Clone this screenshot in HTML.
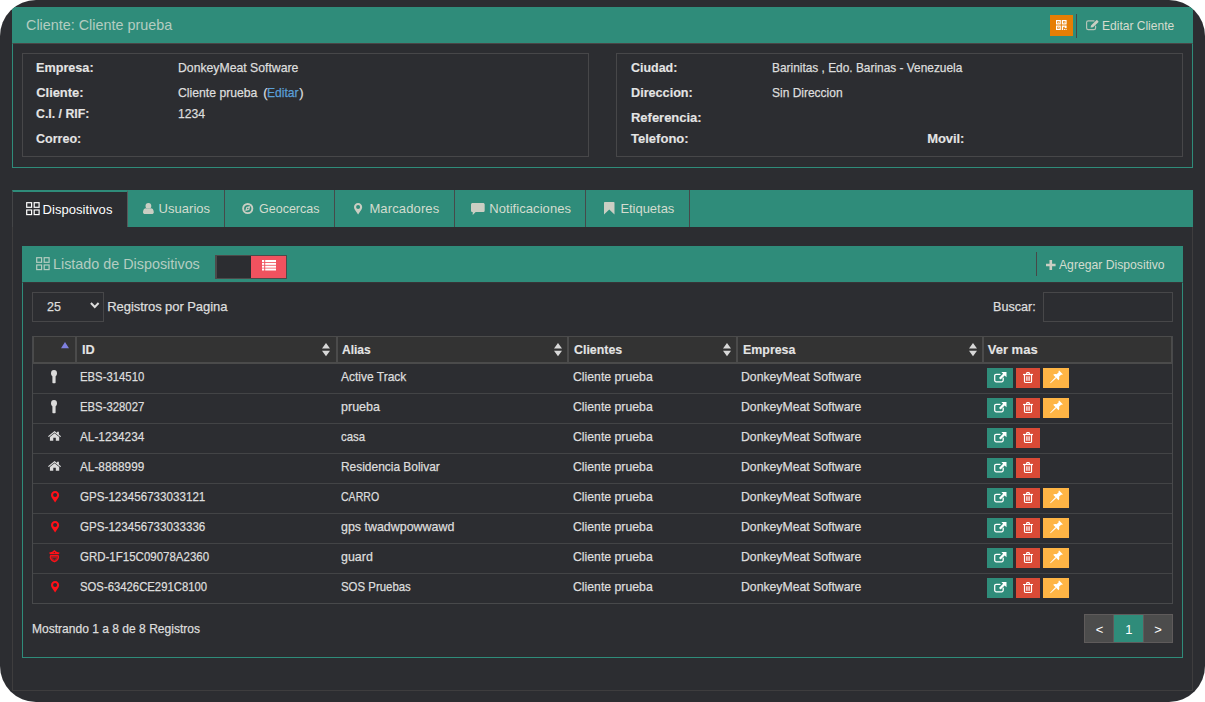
<!DOCTYPE html>
<html lang="es">
<head>
<meta charset="utf-8">
<title>Cliente: Cliente prueba</title>
<style>
html,body{margin:0;padding:0;background:#fff;}
body{width:1205px;height:702px;overflow:hidden;font-family:"Liberation Sans",sans-serif;font-size:13px;color:#ddd;}
#app{position:absolute;left:0;top:0;width:1205px;height:702px;background:#2c2d31;border-radius:36px;overflow:hidden;}
.a{position:absolute;}
.t{position:absolute;white-space:pre;line-height:16px;height:16px;transform-origin:0 0;-webkit-text-stroke:0.25px;}
.g{background:#2f8c7a;}
#p1h{left:12px;top:7px;width:1181px;height:36px;}
#p1b{left:12px;top:43px;width:1179px;height:123px;border:1px solid #2f8c7a;border-top:1px solid #4a4647;}
.box{position:absolute;border:1px solid #474749;top:53px;height:102px;}
#tabs{left:12px;top:190px;width:1181px;height:37px;}
#tabc{left:12px;top:227px;width:1179px;height:463px;border:1px solid #3e3d3e;border-top:none;}
#tab1{left:12px;top:190px;width:114px;height:35px;background:#2c2d31;border-top:2px solid #2f8c7a;border-left:1px solid #444547;border-right:1px solid #58595b;}
.sep{position:absolute;top:190px;width:1px;height:37px;background:#46494a;}
#p2h{left:22px;top:246px;width:1161px;height:36px;}
#p2b{left:22px;top:282px;width:1159px;height:374px;border:1px solid #2f8c7a;border-top:1px solid #373437;}
.inp{position:absolute;top:292px;height:28px;border:1px solid #474749;}
#tbl{left:32px;top:336px;width:1139px;height:266px;border:1px solid #48494b;}
.th{position:absolute;top:336px;height:25px;background:#333;border:1px solid #4b4b4b;}
.rl{position:absolute;left:33px;width:1139px;height:1px;background:#434446;}
.bt{position:absolute;height:20px;}
.bg{left:987px;width:26px;background:#2f8c7a;}
.br{left:1016px;width:24px;background:#d94a36;}
.by{left:1043px;width:26px;background:#ffb545;}
.pg{position:absolute;top:614px;height:27px;width:29px;border:1px solid #5f5b5b;background:#4c4c4c;}
svg{position:absolute;overflow:visible;}
</style>
</head>
<body>
<div id="app">
<!-- client panel -->
<div id="p1h" class="a g"></div>
<div id="p1b" class="a"></div>
<div class="box" style="left:22px;width:565px;"></div>
<div class="box" style="left:616px;width:565px;"></div>
<div class="a" style="left:1050px;top:15px;width:23px;height:21px;background:#e67e04;"></div>
<div class="a" style="left:1076px;top:14px;width:1px;height:24px;background:#474848;"></div>
<!-- tabs -->
<div id="tabs" class="a g"></div>
<div id="tabc" class="a"></div>
<div id="tab1" class="a"></div>
<div class="sep" style="left:224px"></div>
<div class="sep" style="left:334px"></div>
<div class="sep" style="left:454px"></div>
<div class="sep" style="left:585px"></div>
<div class="sep" style="left:689px"></div>
<!-- devices panel -->
<div id="p2h" class="a g"></div>
<div id="p2b" class="a"></div>
<div class="a" style="left:1036px;top:252px;width:1px;height:24px;background:#474848;"></div>
<div class="a" style="left:215px;top:255px;width:69px;height:22px;border:1px solid #4c4a4a;border-left-width:2px;background:#2c2d31;"></div>
<div class="a" style="left:251px;top:256px;width:35px;height:22px;background:#f0525f;"></div>
<div class="inp" style="left:32px;width:70px;"></div>
<div class="inp" style="left:1043px;width:128px;"></div>
<!-- table -->
<div id="tbl" class="a"></div>
<div class="th" style="left:33px;width:41px;"></div>
<div class="th" style="left:76px;width:259px;"></div>
<div class="th" style="left:337px;width:229px;"></div>
<div class="th" style="left:568px;width:167px;"></div>
<div class="th" style="left:737px;width:244px;"></div>
<div class="th" style="left:983px;width:187px;"></div>
<div class="rl" style="top:363px;background:#4b4b4b"></div>
<div class="rl" style="top:393px"></div>
<div class="bt bg" style="top:368px"></div><div class="bt br" style="top:368px"></div>
<div class="bt by" style="top:368px"></div>
<div class="rl" style="top:423px"></div>
<div class="bt bg" style="top:398px"></div><div class="bt br" style="top:398px"></div>
<div class="bt by" style="top:398px"></div>
<div class="rl" style="top:453px"></div>
<div class="bt bg" style="top:428px"></div><div class="bt br" style="top:428px"></div>
<div class="rl" style="top:483px"></div>
<div class="bt bg" style="top:458px"></div><div class="bt br" style="top:458px"></div>
<div class="rl" style="top:513px"></div>
<div class="bt bg" style="top:488px"></div><div class="bt br" style="top:488px"></div>
<div class="bt by" style="top:488px"></div>
<div class="rl" style="top:543px"></div>
<div class="bt bg" style="top:518px"></div><div class="bt br" style="top:518px"></div>
<div class="bt by" style="top:518px"></div>
<div class="rl" style="top:573px"></div>
<div class="bt bg" style="top:548px"></div><div class="bt br" style="top:548px"></div>
<div class="bt by" style="top:548px"></div>
<div class="bt bg" style="top:578px"></div><div class="bt br" style="top:578px"></div>
<div class="bt by" style="top:578px"></div>
<!-- pagination -->
<div class="pg" style="left:1084px;width:28px;"></div>
<div class="pg" style="left:1143px;width:28px;"></div>
<div class="pg" style="left:1113px;width:29px;background:#2f8c7a;"></div>
<svg style="left:1056px;top:20px" width="11" height="10" viewBox="0 0 11 10"><g fill="none" stroke="#fff" stroke-width="1.2"><rect x="0.6" y="0.6" width="3.6" height="3.3"/><rect x="6.4" y="0.6" width="3.6" height="3.3"/><rect x="0.6" y="6.1" width="3.6" height="3.3"/></g><g fill="#fff"><rect x="1.9" y="1.8" width="1" height="0.9"/><rect x="7.7" y="1.8" width="1" height="0.9"/><rect x="1.9" y="7.3" width="1" height="0.9"/><rect x="5.8" y="5.5" width="1.3" height="4.5"/><rect x="7.1" y="5.5" width="1.6" height="1.6"/><rect x="8.7" y="5.5" width="1.9" height="2.6"/><rect x="7.9" y="8.9" width="1" height="1.1"/><rect x="9.6" y="8.9" width="1" height="1.1"/></g></svg>
<svg style="left:1086px;top:20px" width="13" height="10" viewBox="0 0 13 10"><path d="M9.6 6.2 V7.9 a1.7 1.7 0 0 1 -1.7 1.7 H2.3 A1.7 1.7 0 0 1 0.6 7.9 V2.6 A1.7 1.7 0 0 1 2.3 0.9 H8" fill="none" stroke="#cbcec3" stroke-width="1.2" stroke-linecap="round" opacity="0.85"/><path d="M4.6 7.6 l0.4 -2.1 L10.3 0.2 a0.7 0.7 0 0 1 1 0 l1 1 a0.7 0.7 0 0 1 0 1 L7 7.3 z" fill="#cbcec3"/></svg>
<svg style="left:26px;top:201.5px" width="14" height="13.4" viewBox="0 0 14 13.4"><g fill="none" stroke="#fff" stroke-width="1.2"><rect x="0.7" y="0.7" width="4.9" height="4.6"/><rect x="8.2" y="0.7" width="4.9" height="4.6"/><rect x="0.7" y="8" width="4.9" height="4.6"/><rect x="8.2" y="8" width="4.9" height="4.6"/></g></svg>
<svg style="left:35.7px;top:257px" width="14" height="13.4" viewBox="0 0 14 13.4"><g fill="none" stroke="#b4cdc1" stroke-width="1.2"><rect x="0.7" y="0.7" width="4.9" height="4.6"/><rect x="8.2" y="0.7" width="4.9" height="4.6"/><rect x="0.7" y="8" width="4.9" height="4.6"/><rect x="8.2" y="8" width="4.9" height="4.6"/></g></svg>
<svg style="left:143.3px;top:202.7px" width="10.8" height="11.1" viewBox="0 0 10.8 11.1"><circle cx="5.4" cy="2.9" r="2.9" fill="#cbcec3"/><path d="M0 9.3 C0 6.8 1.2 5.2 3 5.2 c0.6 0.5 1.5 0.8 2.4 0.8 s1.8 -0.3 2.4 -0.8 c1.8 0 3 1.6 3 4.1 c0 1.1 -0.8 1.8 -1.9 1.8 H1.9 C0.8 11.1 0 10.4 0 9.3 z" fill="#cbcec3"/></svg>
<svg style="left:242.3px;top:202.7px" width="11.5" height="11.1" viewBox="0 0 11.5 11.1"><circle cx="5.75" cy="5.55" r="4.6" fill="none" stroke="#cbcec3" stroke-width="1.9"/><path d="M3.2 8.1 L4.3 4.1 L8.3 3 L7.2 7 z M5.75 4.8 a0.75 0.75 0 1 0 0 1.5 a0.75 0.75 0 0 0 0 -1.5 z" fill="#cbcec3" fill-rule="evenodd"/></svg>
<svg style="left:354px;top:203px" width="8.2" height="11.4" viewBox="0 0 8.2 11.4"><path d="M4.1 0 C1.8 0 0 1.8 0 4.1 c0 0.9 0.3 1.6 0.7 2.4 L4.1 11.4 l3.4 -4.9 c0.4 -0.8 0.7 -1.5 0.7 -2.4 C8.2 1.8 6.4 0 4.1 0 z m0 6.1 a2 2 0 1 1 0 -4 a2 2 0 0 1 0 4 z" fill="#cbcec3" fill-rule="evenodd"/></svg>
<svg style="left:470.5px;top:203px" width="13.7" height="12" viewBox="0 0 13.7 12"><path d="M0 1.6 C0 0.7 0.7 0 1.6 0 h10.5 c0.9 0 1.6 0.7 1.6 1.6 v5.8 c0 0.9 -0.7 1.6 -1.6 1.6 H4.7 L1.7 11.9 V9 H1.6 C0.7 9 0 8.3 0 7.4 z" fill="#cbcec3"/></svg>
<svg style="left:604.2px;top:202.4px" width="10.5" height="12.5" viewBox="0 0 10.5 12.5"><path d="M0.8 0 h8.9 a0.8 0.8 0 0 1 0.8 0.8 V12.5 L5.25 7.6 L0 12.5 V0.8 A0.8 0.8 0 0 1 0.8 0 z" fill="#cbcec3"/></svg>
<svg style="left:1046px;top:260px" width="9.6" height="10" viewBox="0 0 9.6 10"><path d="M3.5 0 h2.6 v3.7 h3.5 v2.6 H6.1 V10 H3.5 V6.3 H0 V3.7 h3.5 z" fill="#cbcec3"/></svg>
<svg style="left:261.6px;top:260.2px" width="14" height="10.5" viewBox="0 0 14 10.5"><g fill="#fff"><rect x="0" y="0" width="2.2" height="2"/><rect x="3.2" y="0" width="10.8" height="2"/><rect x="0" y="2.85" width="2.2" height="2"/><rect x="3.2" y="2.85" width="10.8" height="2"/><rect x="0" y="5.7" width="2.2" height="2"/><rect x="3.2" y="5.7" width="10.8" height="2"/><rect x="0" y="8.5" width="2.2" height="2"/><rect x="3.2" y="8.5" width="10.8" height="2"/></g></svg>
<svg style="left:89.5px;top:302.3px" width="9.5" height="6.6" viewBox="0 0 9.5 6.6"><path d="M0.9 1 l3.85 4 L8.6 1" fill="none" stroke="#ddd" stroke-width="2"/></svg>
<svg style="left:322.4px;top:343px" width="8" height="13.3" viewBox="0 0 8 13.3"><path d="M4 0 L8 5.6 H0 z M4 13.3 L8 7.7 H0 z" fill="#d8d8d8"/></svg>
<svg style="left:553.5px;top:343px" width="8" height="13.3" viewBox="0 0 8 13.3"><path d="M4 0 L8 5.6 H0 z M4 13.3 L8 7.7 H0 z" fill="#d8d8d8"/></svg>
<svg style="left:722.5px;top:343px" width="8" height="13.3" viewBox="0 0 8 13.3"><path d="M4 0 L8 5.6 H0 z M4 13.3 L8 7.7 H0 z" fill="#d8d8d8"/></svg>
<svg style="left:968.5px;top:343px" width="8" height="13.3" viewBox="0 0 8 13.3"><path d="M4 0 L8 5.6 H0 z M4 13.3 L8 7.7 H0 z" fill="#d8d8d8"/></svg>
<svg style="left:60.8px;top:342.1px" width="8" height="6.3" viewBox="0 0 8 6.3"><path d="M4 0 L8 6.3 H0 z" fill="#7f80df"/></svg>
<svg style="left:994px;top:371.5px" width="13" height="10.6" viewBox="0 0 13 10.6"><path d="M9.2 6.1 V8.3 a1.5 1.5 0 0 1 -1.5 1.5 H2.2 A1.5 1.5 0 0 1 0.7 8.3 V3.8 A1.5 1.5 0 0 1 2.2 2.3 H6" fill="none" stroke="#fff" stroke-width="1.3" stroke-linecap="round"/><path d="M7.3 0 h5.2 v5.2 L10.7 3.4 L6.6 7.5 L5 5.9 L9.1 1.8 z" fill="#fff"/></svg>
<svg style="left:1023px;top:372px" width="10" height="11" viewBox="0 0 10 11"><g fill="none" stroke="#fff"><path d="M1.5 3 V9.4 a1.1 1.1 0 0 0 1.1 1.1 H7.4 A1.1 1.1 0 0 0 8.5 9.4 V3" stroke-width="1.2"/><path d="M0 2.5 H10" stroke-width="1.2"/><path d="M3.4 2.3 L4 0.6 H6 L6.6 2.3" stroke-width="1.1"/><path d="M3.7 4.3 V8.8 M5 4.3 V8.8 M6.3 4.3 V8.8" stroke-width="0.9"/></g></svg>
<svg style="left:1049.8px;top:371px" width="12.4" height="12.2" viewBox="0 0 12.4 12.2"><g transform="translate(7.2 5.2) rotate(45)" fill="#fff"><path d="M-2.6 -5.3 h5.2 v1.1 h-0.9 v3.3 c1.2 0.5 2.1 1.6 2.1 2.8 H-3.8 c0 -1.2 0.9 -2.3 2.1 -2.8 V-4.2 h-0.9 z"/><path d="M-0.65 1.9 h1.3 L0.25 9.7 h-0.5 z"/></g></svg>
<svg style="left:994px;top:401.5px" width="13" height="10.6" viewBox="0 0 13 10.6"><path d="M9.2 6.1 V8.3 a1.5 1.5 0 0 1 -1.5 1.5 H2.2 A1.5 1.5 0 0 1 0.7 8.3 V3.8 A1.5 1.5 0 0 1 2.2 2.3 H6" fill="none" stroke="#fff" stroke-width="1.3" stroke-linecap="round"/><path d="M7.3 0 h5.2 v5.2 L10.7 3.4 L6.6 7.5 L5 5.9 L9.1 1.8 z" fill="#fff"/></svg>
<svg style="left:1023px;top:402px" width="10" height="11" viewBox="0 0 10 11"><g fill="none" stroke="#fff"><path d="M1.5 3 V9.4 a1.1 1.1 0 0 0 1.1 1.1 H7.4 A1.1 1.1 0 0 0 8.5 9.4 V3" stroke-width="1.2"/><path d="M0 2.5 H10" stroke-width="1.2"/><path d="M3.4 2.3 L4 0.6 H6 L6.6 2.3" stroke-width="1.1"/><path d="M3.7 4.3 V8.8 M5 4.3 V8.8 M6.3 4.3 V8.8" stroke-width="0.9"/></g></svg>
<svg style="left:1049.8px;top:401px" width="12.4" height="12.2" viewBox="0 0 12.4 12.2"><g transform="translate(7.2 5.2) rotate(45)" fill="#fff"><path d="M-2.6 -5.3 h5.2 v1.1 h-0.9 v3.3 c1.2 0.5 2.1 1.6 2.1 2.8 H-3.8 c0 -1.2 0.9 -2.3 2.1 -2.8 V-4.2 h-0.9 z"/><path d="M-0.65 1.9 h1.3 L0.25 9.7 h-0.5 z"/></g></svg>
<svg style="left:994px;top:431.5px" width="13" height="10.6" viewBox="0 0 13 10.6"><path d="M9.2 6.1 V8.3 a1.5 1.5 0 0 1 -1.5 1.5 H2.2 A1.5 1.5 0 0 1 0.7 8.3 V3.8 A1.5 1.5 0 0 1 2.2 2.3 H6" fill="none" stroke="#fff" stroke-width="1.3" stroke-linecap="round"/><path d="M7.3 0 h5.2 v5.2 L10.7 3.4 L6.6 7.5 L5 5.9 L9.1 1.8 z" fill="#fff"/></svg>
<svg style="left:1023px;top:432px" width="10" height="11" viewBox="0 0 10 11"><g fill="none" stroke="#fff"><path d="M1.5 3 V9.4 a1.1 1.1 0 0 0 1.1 1.1 H7.4 A1.1 1.1 0 0 0 8.5 9.4 V3" stroke-width="1.2"/><path d="M0 2.5 H10" stroke-width="1.2"/><path d="M3.4 2.3 L4 0.6 H6 L6.6 2.3" stroke-width="1.1"/><path d="M3.7 4.3 V8.8 M5 4.3 V8.8 M6.3 4.3 V8.8" stroke-width="0.9"/></g></svg>
<svg style="left:994px;top:461.5px" width="13" height="10.6" viewBox="0 0 13 10.6"><path d="M9.2 6.1 V8.3 a1.5 1.5 0 0 1 -1.5 1.5 H2.2 A1.5 1.5 0 0 1 0.7 8.3 V3.8 A1.5 1.5 0 0 1 2.2 2.3 H6" fill="none" stroke="#fff" stroke-width="1.3" stroke-linecap="round"/><path d="M7.3 0 h5.2 v5.2 L10.7 3.4 L6.6 7.5 L5 5.9 L9.1 1.8 z" fill="#fff"/></svg>
<svg style="left:1023px;top:462px" width="10" height="11" viewBox="0 0 10 11"><g fill="none" stroke="#fff"><path d="M1.5 3 V9.4 a1.1 1.1 0 0 0 1.1 1.1 H7.4 A1.1 1.1 0 0 0 8.5 9.4 V3" stroke-width="1.2"/><path d="M0 2.5 H10" stroke-width="1.2"/><path d="M3.4 2.3 L4 0.6 H6 L6.6 2.3" stroke-width="1.1"/><path d="M3.7 4.3 V8.8 M5 4.3 V8.8 M6.3 4.3 V8.8" stroke-width="0.9"/></g></svg>
<svg style="left:994px;top:491.5px" width="13" height="10.6" viewBox="0 0 13 10.6"><path d="M9.2 6.1 V8.3 a1.5 1.5 0 0 1 -1.5 1.5 H2.2 A1.5 1.5 0 0 1 0.7 8.3 V3.8 A1.5 1.5 0 0 1 2.2 2.3 H6" fill="none" stroke="#fff" stroke-width="1.3" stroke-linecap="round"/><path d="M7.3 0 h5.2 v5.2 L10.7 3.4 L6.6 7.5 L5 5.9 L9.1 1.8 z" fill="#fff"/></svg>
<svg style="left:1023px;top:492px" width="10" height="11" viewBox="0 0 10 11"><g fill="none" stroke="#fff"><path d="M1.5 3 V9.4 a1.1 1.1 0 0 0 1.1 1.1 H7.4 A1.1 1.1 0 0 0 8.5 9.4 V3" stroke-width="1.2"/><path d="M0 2.5 H10" stroke-width="1.2"/><path d="M3.4 2.3 L4 0.6 H6 L6.6 2.3" stroke-width="1.1"/><path d="M3.7 4.3 V8.8 M5 4.3 V8.8 M6.3 4.3 V8.8" stroke-width="0.9"/></g></svg>
<svg style="left:1049.8px;top:491px" width="12.4" height="12.2" viewBox="0 0 12.4 12.2"><g transform="translate(7.2 5.2) rotate(45)" fill="#fff"><path d="M-2.6 -5.3 h5.2 v1.1 h-0.9 v3.3 c1.2 0.5 2.1 1.6 2.1 2.8 H-3.8 c0 -1.2 0.9 -2.3 2.1 -2.8 V-4.2 h-0.9 z"/><path d="M-0.65 1.9 h1.3 L0.25 9.7 h-0.5 z"/></g></svg>
<svg style="left:994px;top:521.5px" width="13" height="10.6" viewBox="0 0 13 10.6"><path d="M9.2 6.1 V8.3 a1.5 1.5 0 0 1 -1.5 1.5 H2.2 A1.5 1.5 0 0 1 0.7 8.3 V3.8 A1.5 1.5 0 0 1 2.2 2.3 H6" fill="none" stroke="#fff" stroke-width="1.3" stroke-linecap="round"/><path d="M7.3 0 h5.2 v5.2 L10.7 3.4 L6.6 7.5 L5 5.9 L9.1 1.8 z" fill="#fff"/></svg>
<svg style="left:1023px;top:522px" width="10" height="11" viewBox="0 0 10 11"><g fill="none" stroke="#fff"><path d="M1.5 3 V9.4 a1.1 1.1 0 0 0 1.1 1.1 H7.4 A1.1 1.1 0 0 0 8.5 9.4 V3" stroke-width="1.2"/><path d="M0 2.5 H10" stroke-width="1.2"/><path d="M3.4 2.3 L4 0.6 H6 L6.6 2.3" stroke-width="1.1"/><path d="M3.7 4.3 V8.8 M5 4.3 V8.8 M6.3 4.3 V8.8" stroke-width="0.9"/></g></svg>
<svg style="left:1049.8px;top:521px" width="12.4" height="12.2" viewBox="0 0 12.4 12.2"><g transform="translate(7.2 5.2) rotate(45)" fill="#fff"><path d="M-2.6 -5.3 h5.2 v1.1 h-0.9 v3.3 c1.2 0.5 2.1 1.6 2.1 2.8 H-3.8 c0 -1.2 0.9 -2.3 2.1 -2.8 V-4.2 h-0.9 z"/><path d="M-0.65 1.9 h1.3 L0.25 9.7 h-0.5 z"/></g></svg>
<svg style="left:994px;top:551.5px" width="13" height="10.6" viewBox="0 0 13 10.6"><path d="M9.2 6.1 V8.3 a1.5 1.5 0 0 1 -1.5 1.5 H2.2 A1.5 1.5 0 0 1 0.7 8.3 V3.8 A1.5 1.5 0 0 1 2.2 2.3 H6" fill="none" stroke="#fff" stroke-width="1.3" stroke-linecap="round"/><path d="M7.3 0 h5.2 v5.2 L10.7 3.4 L6.6 7.5 L5 5.9 L9.1 1.8 z" fill="#fff"/></svg>
<svg style="left:1023px;top:552px" width="10" height="11" viewBox="0 0 10 11"><g fill="none" stroke="#fff"><path d="M1.5 3 V9.4 a1.1 1.1 0 0 0 1.1 1.1 H7.4 A1.1 1.1 0 0 0 8.5 9.4 V3" stroke-width="1.2"/><path d="M0 2.5 H10" stroke-width="1.2"/><path d="M3.4 2.3 L4 0.6 H6 L6.6 2.3" stroke-width="1.1"/><path d="M3.7 4.3 V8.8 M5 4.3 V8.8 M6.3 4.3 V8.8" stroke-width="0.9"/></g></svg>
<svg style="left:1049.8px;top:551px" width="12.4" height="12.2" viewBox="0 0 12.4 12.2"><g transform="translate(7.2 5.2) rotate(45)" fill="#fff"><path d="M-2.6 -5.3 h5.2 v1.1 h-0.9 v3.3 c1.2 0.5 2.1 1.6 2.1 2.8 H-3.8 c0 -1.2 0.9 -2.3 2.1 -2.8 V-4.2 h-0.9 z"/><path d="M-0.65 1.9 h1.3 L0.25 9.7 h-0.5 z"/></g></svg>
<svg style="left:994px;top:581.5px" width="13" height="10.6" viewBox="0 0 13 10.6"><path d="M9.2 6.1 V8.3 a1.5 1.5 0 0 1 -1.5 1.5 H2.2 A1.5 1.5 0 0 1 0.7 8.3 V3.8 A1.5 1.5 0 0 1 2.2 2.3 H6" fill="none" stroke="#fff" stroke-width="1.3" stroke-linecap="round"/><path d="M7.3 0 h5.2 v5.2 L10.7 3.4 L6.6 7.5 L5 5.9 L9.1 1.8 z" fill="#fff"/></svg>
<svg style="left:1023px;top:582px" width="10" height="11" viewBox="0 0 10 11"><g fill="none" stroke="#fff"><path d="M1.5 3 V9.4 a1.1 1.1 0 0 0 1.1 1.1 H7.4 A1.1 1.1 0 0 0 8.5 9.4 V3" stroke-width="1.2"/><path d="M0 2.5 H10" stroke-width="1.2"/><path d="M3.4 2.3 L4 0.6 H6 L6.6 2.3" stroke-width="1.1"/><path d="M3.7 4.3 V8.8 M5 4.3 V8.8 M6.3 4.3 V8.8" stroke-width="0.9"/></g></svg>
<svg style="left:1049.8px;top:581px" width="12.4" height="12.2" viewBox="0 0 12.4 12.2"><g transform="translate(7.2 5.2) rotate(45)" fill="#fff"><path d="M-2.6 -5.3 h5.2 v1.1 h-0.9 v3.3 c1.2 0.5 2.1 1.6 2.1 2.8 H-3.8 c0 -1.2 0.9 -2.3 2.1 -2.8 V-4.2 h-0.9 z"/><path d="M-0.65 1.9 h1.3 L0.25 9.7 h-0.5 z"/></g></svg>
<svg style="left:51px;top:369.8px" width="6" height="13.5" viewBox="0 0 6 13.5"><ellipse cx="3" cy="3.3" rx="2.95" ry="3.3" fill="#dcdcdc"/><path d="M1.4 5 h3.2 V12.6 a0.7 0.7 0 0 1 -0.7 0.7 h-1.8 a0.7 0.7 0 0 1 -0.7 -0.7 z" fill="#dcdcdc"/></svg>
<svg style="left:51px;top:399.8px" width="6" height="13.5" viewBox="0 0 6 13.5"><ellipse cx="3" cy="3.3" rx="2.95" ry="3.3" fill="#dcdcdc"/><path d="M1.4 5 h3.2 V12.6 a0.7 0.7 0 0 1 -0.7 0.7 h-1.8 a0.7 0.7 0 0 1 -0.7 -0.7 z" fill="#dcdcdc"/></svg>
<svg style="left:48px;top:431.2px" width="13.1" height="9.8" viewBox="0 0 12.4 9.7" preserveAspectRatio="none"><path d="M6.2 2.3 L1.8 5.9 V9.7 H5 V6.8 H7.4 V9.7 h3.2 V5.9 z" fill="#ddd"/><path d="M0 5.1 L6.2 0 L8.6 2 V0.8 h1.7 v2.6 L12.4 5.1 l-0.8 0.9 L6.2 1.6 L0.8 6 z" fill="#ddd"/></svg>
<svg style="left:48px;top:461.2px" width="13.1" height="9.8" viewBox="0 0 12.4 9.7" preserveAspectRatio="none"><path d="M6.2 2.3 L1.8 5.9 V9.7 H5 V6.8 H7.4 V9.7 h3.2 V5.9 z" fill="#ddd"/><path d="M0 5.1 L6.2 0 L8.6 2 V0.8 h1.7 v2.6 L12.4 5.1 l-0.8 0.9 L6.2 1.6 L0.8 6 z" fill="#ddd"/></svg>
<svg style="left:50.6px;top:490.8px" width="8.2" height="11.4" viewBox="0 0 8.2 11.4"><path d="M4.1 0 C1.8 0 0 1.8 0 4.1 c0 0.9 0.3 1.6 0.7 2.4 L4.1 11.4 l3.4 -4.9 c0.4 -0.8 0.7 -1.5 0.7 -2.4 C8.2 1.8 6.4 0 4.1 0 z m0 6.1 a2 2 0 1 1 0 -4 a2 2 0 0 1 0 4 z" fill="#ff1018" fill-rule="evenodd"/></svg>
<svg style="left:50.6px;top:520.8px" width="8.2" height="11.4" viewBox="0 0 8.2 11.4"><path d="M4.1 0 C1.8 0 0 1.8 0 4.1 c0 0.9 0.3 1.6 0.7 2.4 L4.1 11.4 l3.4 -4.9 c0.4 -0.8 0.7 -1.5 0.7 -2.4 C8.2 1.8 6.4 0 4.1 0 z m0 6.1 a2 2 0 1 1 0 -4 a2 2 0 0 1 0 4 z" fill="#ff1018" fill-rule="evenodd"/></svg>
<svg style="left:49.4px;top:549.8px" width="10.6" height="12.3" viewBox="0 0 10.6 12.3"><path d="M0 2.8 L3.2 1.7 L5.4 0 L7.6 1.7 L10.8 2.8 L9.7 4.3 H1.1 z M5.3 2 a0.6 0.6 0 1 0 0 1.2 a0.6 0.6 0 0 0 0 -1.2 z" fill="#ff1018" fill-rule="evenodd"/><path d="M1.5 5.7 H9.3 C10.2 7.8 8.6 10.6 5.4 11.8 C2.2 10.6 0.6 7.8 1.5 5.7 z" fill="#ff1018" fill-opacity="0.55" stroke="#ff1018" stroke-width="1.2" stroke-linejoin="round"/><path d="M3.6 8.3 h3.6 L5.4 9.8 z" fill="#2c2d31"/></svg>
<svg style="left:50.6px;top:580.8px" width="8.2" height="11.4" viewBox="0 0 8.2 11.4"><path d="M4.1 0 C1.8 0 0 1.8 0 4.1 c0 0.9 0.3 1.6 0.7 2.4 L4.1 11.4 l3.4 -4.9 c0.4 -0.8 0.7 -1.5 0.7 -2.4 C8.2 1.8 6.4 0 4.1 0 z m0 6.1 a2 2 0 1 1 0 -4 a2 2 0 0 1 0 4 z" fill="#ff1018" fill-rule="evenodd"/></svg>
<span class="t" style="left:26.3px;top:17px;color:#b4cdc1;font-size:15px;-webkit-text-stroke:0;transform:scaleX(0.9581);">Cliente: Cliente prueba</span>
<span class="t" style="left:1101.8px;top:18px;color:#d5dccf;-webkit-text-stroke:0;transform:scaleX(0.9251);">Editar Cliente</span>
<span class="t" style="left:36.3px;top:60px;color:#e4e4e4;font-weight:bold;-webkit-text-stroke:0.12px;transform:scaleX(0.9722);">Empresa:</span>
<span class="t" style="left:36.3px;top:85px;color:#e4e4e4;font-weight:bold;-webkit-text-stroke:0.12px;letter-spacing:-0.07px;">Cliente:</span>
<span class="t" style="left:36.3px;top:106px;color:#e4e4e4;font-weight:bold;-webkit-text-stroke:0.12px;transform:scaleX(0.9478);">C.I. / RIF:</span>
<span class="t" style="left:36.3px;top:131px;color:#e4e4e4;font-weight:bold;-webkit-text-stroke:0.12px;transform:scaleX(0.9627);">Correo:</span>
<span class="t" style="left:177.6px;top:60px;color:#ddd;transform:scaleX(0.9413);">DonkeyMeat Software</span>
<span class="t" style="left:177.6px;top:85px;color:#ddd;transform:scaleX(0.9390);">Cliente prueba</span>
<span class="t" style="left:263.3px;top:85px;color:#ddd;">(</span>
<span class="t" style="left:267.2px;top:85px;color:#5a9fd8;transform:scaleX(0.9303);">Editar</span>
<span class="t" style="left:299.3px;top:85px;color:#ddd;">)</span>
<span class="t" style="left:177.6px;top:106px;color:#ddd;transform:scaleX(0.9370);">1234</span>
<span class="t" style="left:631.0px;top:60px;color:#e4e4e4;font-weight:bold;-webkit-text-stroke:0.12px;transform:scaleX(0.9568);">Ciudad:</span>
<span class="t" style="left:631.0px;top:85px;color:#e4e4e4;font-weight:bold;-webkit-text-stroke:0.12px;transform:scaleX(0.9720);">Direccion:</span>
<span class="t" style="left:631.0px;top:110px;color:#e4e4e4;font-weight:bold;-webkit-text-stroke:0.12px;letter-spacing:-0.02px;">Referencia:</span>
<span class="t" style="left:631.0px;top:131px;color:#e4e4e4;font-weight:bold;-webkit-text-stroke:0.12px;letter-spacing:0.01px;">Telefono:</span>
<span class="t" style="left:927.2px;top:131px;color:#e4e4e4;font-weight:bold;-webkit-text-stroke:0.12px;letter-spacing:-0.07px;">Movil:</span>
<span class="t" style="left:771.8px;top:60px;color:#ddd;transform:scaleX(0.9144);">Barinitas , Edo. Barinas - Venezuela</span>
<span class="t" style="left:771.8px;top:85px;color:#ddd;transform:scaleX(0.9217);">Sin Direccion</span>
<span class="t" style="left:42.5px;top:202px;color:#fff;-webkit-text-stroke:0;letter-spacing:0.05px;">Dispositivos</span>
<span class="t" style="left:158.6px;top:201px;color:#d3dccf;-webkit-text-stroke:0;letter-spacing:0.03px;">Usuarios</span>
<span class="t" style="left:259.4px;top:201px;color:#d3dccf;-webkit-text-stroke:0;transform:scaleX(0.9622);">Geocercas</span>
<span class="t" style="left:369.4px;top:201px;color:#d3dccf;-webkit-text-stroke:0;letter-spacing:0.13px;">Marcadores</span>
<span class="t" style="left:489.2px;top:201px;color:#d3dccf;-webkit-text-stroke:0;letter-spacing:0.07px;">Notificaciones</span>
<span class="t" style="left:620.4px;top:201px;color:#d3dccf;-webkit-text-stroke:0;letter-spacing:-0.03px;">Etiquetas</span>
<span class="t" style="left:53.2px;top:256px;color:#b4cdc1;font-size:15px;-webkit-text-stroke:0;transform:scaleX(0.9568);">Listado de Dispositivos</span>
<span class="t" style="left:1058.6px;top:257px;color:#d3dccf;-webkit-text-stroke:0;transform:scaleX(0.9368);">Agregar Dispositivo</span>
<span class="t" style="left:46.7px;top:299px;color:#ddd;transform:scaleX(0.9607);">25</span>
<span class="t" style="left:107.3px;top:299px;color:#ddd;letter-spacing:-0.07px;">Registros por Pagina</span>
<span class="t" style="left:992.9px;top:299px;color:#ddd;transform:scaleX(0.9710);">Buscar:</span>
<span class="t" style="left:81.6px;top:342px;color:#e4e4e4;font-weight:bold;-webkit-text-stroke:0.12px;transform:scaleX(0.9769);">ID</span>
<span class="t" style="left:342.3px;top:342px;color:#e4e4e4;font-weight:bold;-webkit-text-stroke:0.12px;transform:scaleX(0.9235);">Alias</span>
<span class="t" style="left:573.5px;top:342px;color:#e4e4e4;font-weight:bold;-webkit-text-stroke:0.12px;transform:scaleX(0.9530);">Clientes</span>
<span class="t" style="left:742.6px;top:342px;color:#e4e4e4;font-weight:bold;-webkit-text-stroke:0.12px;transform:scaleX(0.9541);">Empresa</span>
<span class="t" style="left:987.8px;top:342px;color:#e4e4e4;font-weight:bold;-webkit-text-stroke:0.12px;letter-spacing:-0.01px;">Ver mas</span>
<span class="t" style="left:80.4px;top:369px;color:#ddd;transform:scaleX(0.8720);">EBS-314510</span>
<span class="t" style="left:341.2px;top:369px;color:#ddd;transform:scaleX(0.9224);">Active Track</span>
<span class="t" style="left:572.5px;top:369px;color:#ddd;transform:scaleX(0.9425);">Cliente prueba</span>
<span class="t" style="left:741.3px;top:369px;color:#ddd;transform:scaleX(0.9413);">DonkeyMeat Software</span>
<span class="t" style="left:80.4px;top:399px;color:#ddd;transform:scaleX(0.8720);">EBS-328027</span>
<span class="t" style="left:341.2px;top:399px;color:#ddd;transform:scaleX(0.9633);">prueba</span>
<span class="t" style="left:572.5px;top:399px;color:#ddd;transform:scaleX(0.9425);">Cliente prueba</span>
<span class="t" style="left:741.3px;top:399px;color:#ddd;transform:scaleX(0.9413);">DonkeyMeat Software</span>
<span class="t" style="left:80.4px;top:429px;color:#ddd;transform:scaleX(0.9076);">AL-1234234</span>
<span class="t" style="left:341.2px;top:429px;color:#ddd;transform:scaleX(0.8774);">casa</span>
<span class="t" style="left:572.5px;top:429px;color:#ddd;transform:scaleX(0.9425);">Cliente prueba</span>
<span class="t" style="left:741.3px;top:429px;color:#ddd;transform:scaleX(0.9413);">DonkeyMeat Software</span>
<span class="t" style="left:80.4px;top:459px;color:#ddd;transform:scaleX(0.9076);">AL-8888999</span>
<span class="t" style="left:341.2px;top:459px;color:#ddd;transform:scaleX(0.9176);">Residencia Bolivar</span>
<span class="t" style="left:572.5px;top:459px;color:#ddd;transform:scaleX(0.9425);">Cliente prueba</span>
<span class="t" style="left:741.3px;top:459px;color:#ddd;transform:scaleX(0.9413);">DonkeyMeat Software</span>
<span class="t" style="left:80.4px;top:489px;color:#ddd;transform:scaleX(0.8935);">GPS-123456733033121</span>
<span class="t" style="left:341.2px;top:489px;color:#ddd;transform:scaleX(0.8114);">CARRO</span>
<span class="t" style="left:572.5px;top:489px;color:#ddd;transform:scaleX(0.9425);">Cliente prueba</span>
<span class="t" style="left:741.3px;top:489px;color:#ddd;transform:scaleX(0.9413);">DonkeyMeat Software</span>
<span class="t" style="left:80.4px;top:519px;color:#ddd;transform:scaleX(0.8935);">GPS-123456733033336</span>
<span class="t" style="left:341.2px;top:519px;color:#ddd;transform:scaleX(0.9560);">gps twadwpowwawd</span>
<span class="t" style="left:572.5px;top:519px;color:#ddd;transform:scaleX(0.9425);">Cliente prueba</span>
<span class="t" style="left:741.3px;top:519px;color:#ddd;transform:scaleX(0.9413);">DonkeyMeat Software</span>
<span class="t" style="left:80.4px;top:549px;color:#ddd;transform:scaleX(0.8843);">GRD-1F15C09078A2360</span>
<span class="t" style="left:341.2px;top:549px;color:#ddd;transform:scaleX(0.9564);">guard</span>
<span class="t" style="left:572.5px;top:549px;color:#ddd;transform:scaleX(0.9425);">Cliente prueba</span>
<span class="t" style="left:741.3px;top:549px;color:#ddd;transform:scaleX(0.9413);">DonkeyMeat Software</span>
<span class="t" style="left:80.4px;top:579px;color:#ddd;transform:scaleX(0.8705);">SOS-63426CE291C8100</span>
<span class="t" style="left:341.2px;top:579px;color:#ddd;transform:scaleX(0.8780);">SOS Pruebas</span>
<span class="t" style="left:572.5px;top:579px;color:#ddd;transform:scaleX(0.9425);">Cliente prueba</span>
<span class="t" style="left:741.3px;top:579px;color:#ddd;transform:scaleX(0.9413);">DonkeyMeat Software</span>
<span class="t" style="left:32.3px;top:621px;color:#ddd;transform:scaleX(0.9262);">Mostrando 1 a 8 de 8 Registros</span>
<span class="t" style="left:1095.8px;top:622px;color:#fff;-webkit-text-stroke:0;">&lt;</span>
<span class="t" style="left:1125.3px;top:622px;color:#fff;-webkit-text-stroke:0;">1</span>
<span class="t" style="left:1154.3px;top:622px;color:#fff;-webkit-text-stroke:0;">&gt;</span>
</div>
</body>
</html>
